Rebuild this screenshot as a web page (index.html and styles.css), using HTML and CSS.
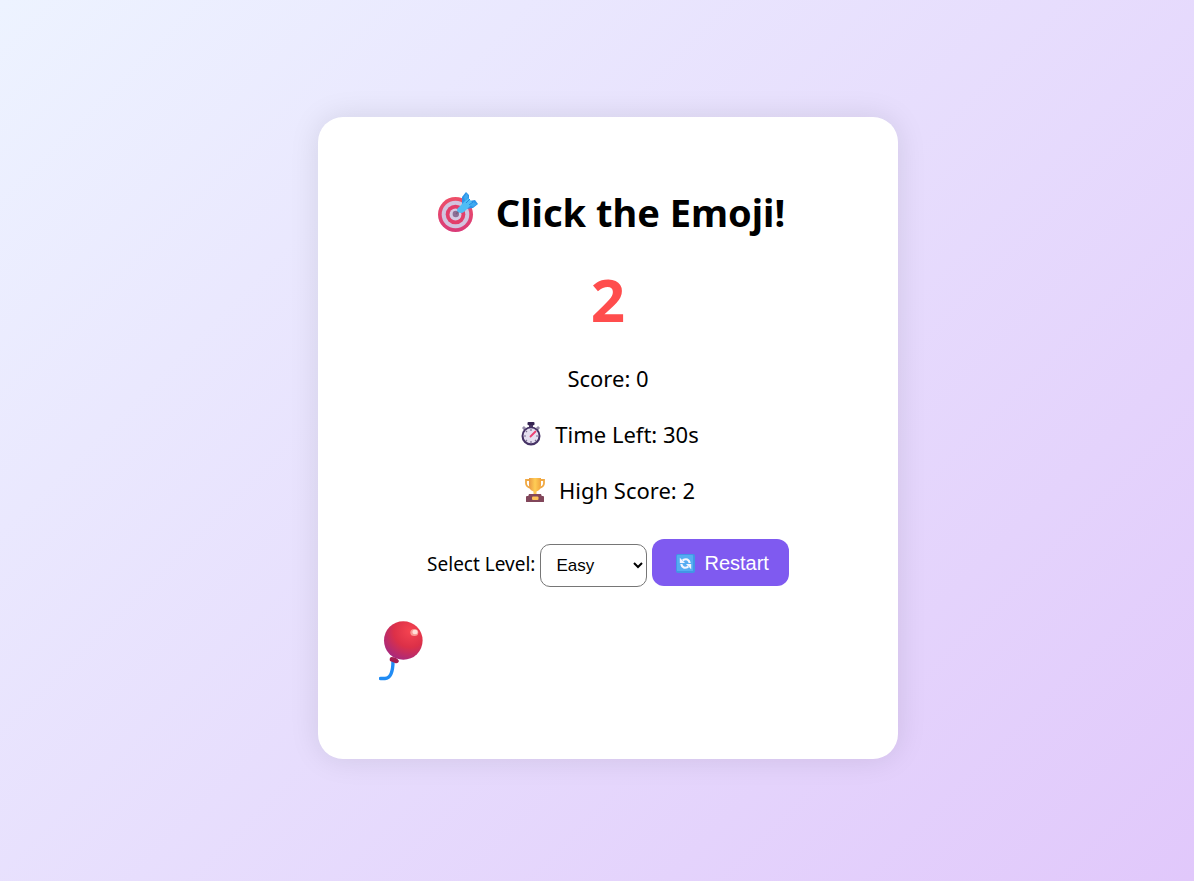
FILE: index.html
```html
<!DOCTYPE html>
<html lang="en">
<head>
<meta charset="utf-8">
<meta name="viewport" content="width=device-width, initial-scale=1">
<title>Click the Emoji!</title>
<link rel="stylesheet" href="styles.css">
</head>
<body>
<main class="card">
  <h1 class="title">
    <svg class="icon-target" viewBox="0 0 40 40" aria-hidden="true">
      <defs>
        <linearGradient id="ring" x1="0" y1="0" x2="0" y2="1"><stop offset="0" stop-color="#ee4f68"/><stop offset="1" stop-color="#d93a78"/></linearGradient>
      </defs>
      <circle cx="17.500" cy="22.500" r="17.500" fill="url(#ring)"/>
      <circle cx="17.500" cy="22.500" r="13.800" fill="#d2c4df"/>
      <circle cx="17.500" cy="22.500" r="9.800" fill="#e33e6a"/>
      <circle cx="17.500" cy="22.500" r="6" fill="#d6cbe3"/>
      <circle cx="17.800" cy="22" r="3.200" fill="#8d6f96"/>
      <path d="M18 22 23 17" stroke="#786080" stroke-width="1.500"/>
      <path d="M24 13 24 5 28 0 31 3 31 9 37 8 40 12 35 16 28 17Z" fill="#2e93e8"/>
      <path d="M20 16 30 6 35 11 26 20Q23 22 20 20 18 18 20 16Z" fill="#4fbdf5"/>
      <path d="M26 5 29 1 30 5 27 9ZM32 13 35 10 39 12 35 15Z" fill="#3fa9f0"/>
      <path d="M28 11 32 7M31 13 35 10" stroke="#2288df" stroke-width="1" fill="none"/>
    </svg>
    Click the Emoji!
  </h1>
  <div class="count">2</div>
  <p class="stat">Score: 0</p>
  <p class="stat">
    <svg class="icon-stat" viewBox="0 0 24 24" aria-hidden="true">
      <path d="M4 7 6 5M20 7 18 5" stroke="#958ca8" stroke-width="3"/>
      <rect x="10" y="2" width="4" height="4" fill="#4c3a63"/>
      <rect x="8.500" y="0" width="7" height="3.200" rx="1" fill="#352452"/>
      <circle cx="12" cy="14" r="9.500" fill="#453265"/>
      <circle cx="12" cy="13.800" r="7.500" fill="#e5dff0"/>
      <path d="M12 7v2M12 19v2M5 14h2M17 14h2M7 9l1 1M7 19l1-1M17 19l-1-1" stroke="#7a7090" stroke-width="1.200"/>
      <path d="M11.500 14.500 16.500 9.500" stroke="#ec3f70" stroke-width="1.800" stroke-linecap="round"/>
    </svg>
    Time Left: 30s
  </p>
  <p class="stat">
    <svg class="icon-stat" viewBox="0 0 24 24" aria-hidden="true">
      <defs><linearGradient id="gold"><stop offset="0" stop-color="#e99843"/><stop offset=".5" stop-color="#ffcd55"/><stop offset="1" stop-color="#f1a33d"/></linearGradient></defs>
      <path d="M7 2H3V5Q3 9 8 10M17 2H21V5Q21 9 16 10" fill="none" stroke="#f0a943" stroke-width="1.800"/>
      <path d="M6 0H18V7Q18 12 13.500 13.500V17H10.500V13.500Q6 12 6 7Z" fill="url(#gold)"/>
      <path d="M6 16H18L21 24H3Z" fill="#83485c"/>
      <rect x="3" y="18" width="18" height="6" rx="1" fill="#81465a"/>
      <rect x="9" y="18.500" width="6.500" height="3.500" rx="1" fill="#ffc256"/>
    </svg>
    High Score: 2
  </p>
  <div class="controls">
    <label class="level-label" for="level">Select Level:</label>
    <select class="level" id="level"><option>Easy</option><option>Medium</option><option>Hard</option></select>
    <button class="restart" type="button">
      <svg class="icon-restart" viewBox="0 0 20 20" aria-hidden="true">
        <rect width="20" height="20" rx="2" fill="#4196e5"/>
        <rect x="1" y="1" width="17" height="17" rx="1" fill="#55acf2"/>
        <path d="M7 6.500Q13 3.500 14.500 9.500M13 13.500Q7 16.500 5.500 10.500" fill="none" stroke="#f4f5ff" stroke-width="2.300"/>
        <path d="M4 4V9.500H9.500ZM16 16V10.500H10.500Z" fill="#f4f5ff"/>
      </svg>
      Restart
    </button>
  </div>
  <div class="playfield">
    <button class="balloon" type="button" aria-label="Balloon">
      <svg class="icon-balloon" viewBox="0 0 44 60" aria-hidden="true">
        <defs>
          <radialGradient id="skin" cx=".68" cy=".25" r=".85"><stop offset="0" stop-color="#f54450"/><stop offset=".5" stop-color="#dc3048"/><stop offset="1" stop-color="#a22883"/></radialGradient>
        </defs>
        <path d="M14 40Q14 57 6 57.500L1.500 57.500" fill="none" stroke="#218cf4" stroke-width="3.400" stroke-linecap="round"/>
        <circle cx="24.300" cy="19.500" r="19.300" fill="url(#skin)"/>
        <path d="M12 36Q18 36 20 40Q19 43 16 42L11 40Q10 37 12 36Z" fill="#a41e50"/>
        <ellipse cx="35.300" cy="11.500" rx="4" ry="3.600" fill="#f99a94"/>
        <ellipse cx="36" cy="11" rx="2.600" ry="2.200" fill="#ffe0d8"/>
      </svg>
    </button>
  </div>
</main>
</body>
</html>
```
FILE: styles.css
```css
* {
  box-sizing: border-box;
}

body {
  margin: 0;
  min-height: 100vh;
  padding: 0 0 5px 22px;
  display: flex;
  align-items: center;
  justify-content: center;
  background: linear-gradient(135deg, #edf3ff, #e1c8fb);
  color: #000;
  font-family: "Segoe UI", "Noto Sans", sans-serif;
}

.card {
  width: 100%;
  max-width: 580px;
  padding: 67px 60px 78px;
  border-radius: 25px;
  background: #fff;
  box-shadow: 0 0 30px rgba(0, 0, 0, 0.1);
  text-align: center;
}

.title {
  display: flex;
  align-items: center;
  justify-content: center;
  gap: 18px;
  margin: 0;
  padding-left: 7px;
  font-size: 38px;
  line-height: 56px;
}

.icon-target {
  width: 40px;
  height: 40px;
}

.count {
  margin: 19px 0 23px;
  color: #ff4d4d;
  font-size: 60px;
  font-weight: 700;
  line-height: 80px;
}

.stat {
  display: flex;
  align-items: center;
  justify-content: center;
  gap: 12px;
  margin: 0 0 24px;
  font-size: 22px;
  line-height: 32px;
}

.icon-stat {
  width: 24px;
  height: 24px;
  margin-left: 2px;
}

.controls {
  display: flex;
  align-items: flex-start;
  justify-content: center;
  gap: 5px;
  margin-top: 33px;
}

.level-label {
  font-size: 19px;
  line-height: 50px;
}

.level {
  width: 107px;
  height: 43px;
  margin-top: 5px;
  padding: 0 11px;
  border: 1px solid #767676;
  border-radius: 10px;
  background: #fff;
  color: #000;
  font-family: "Liberation Sans", sans-serif;
  font-size: 17px;
}

.restart {
  display: flex;
  align-items: center;
  gap: 9px;
  height: 47px;
  padding: 2px 20px 0 24px;
  border: 0;
  border-radius: 12px;
  background: #7f5af0;
  color: #fff;
  font-family: "Liberation Sans", sans-serif;
  font-size: 20px;
}

.icon-restart {
  width: 19px;
  height: 19px;
}

.playfield {
  display: flex;
  margin-top: 32px;
}

.balloon {
  padding: 0 0 0 1px;
  border: 0;
  background: none;
  cursor: pointer;
}

.icon-balloon {
  display: block;
  width: 44px;
  height: 60px;
}
```
